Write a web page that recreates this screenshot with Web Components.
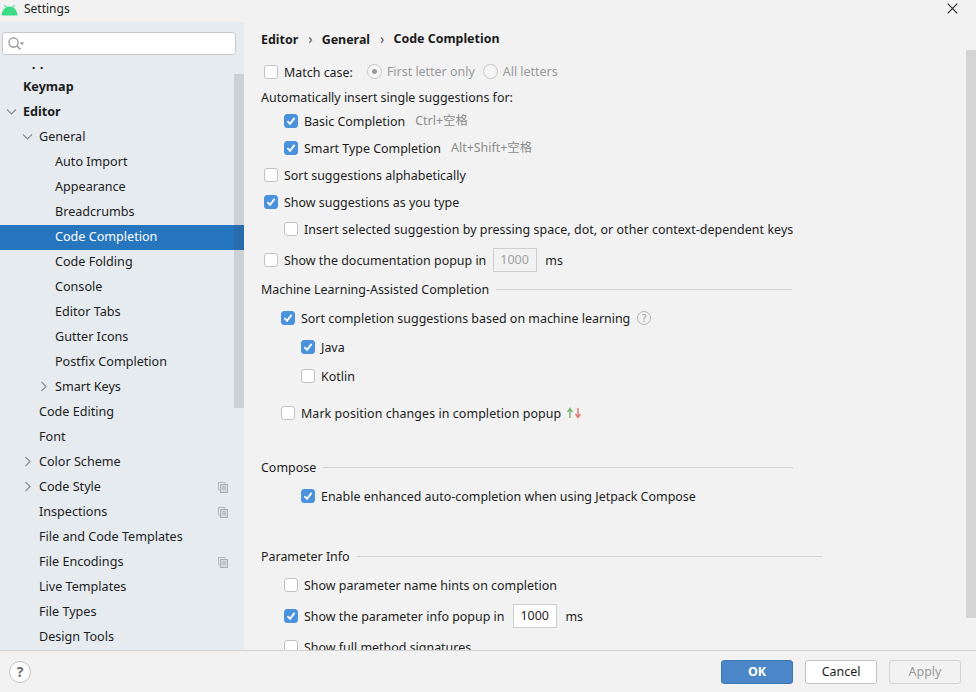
<!DOCTYPE html>
<html>
<head>
<meta charset="utf-8">
<title>Settings</title>
<style>
html, body { margin: 0; padding: 0; background: #f2f2f2; }
body { font: 12.45px "Noto Sans", "Noto Sans CJK SC", sans-serif; color: #1c1c1c; }
</style>
</head>
<body>
<settings-dialog>
  <tree-item slot="tree" bold style="margin-top:-17px">Appearance &amp; Behavior</tree-item>
  <tree-item slot="tree" bold>Keymap</tree-item>
  <tree-item slot="tree" bold arrow="down">Editor</tree-item>
  <tree-item slot="tree" level="1" arrow="down">General</tree-item>
  <tree-item slot="tree" level="2">Auto Import</tree-item>
  <tree-item slot="tree" level="2">Appearance</tree-item>
  <tree-item slot="tree" level="2">Breadcrumbs</tree-item>
  <tree-item slot="tree" level="2" selected>Code Completion</tree-item>
  <tree-item slot="tree" level="2">Code Folding</tree-item>
  <tree-item slot="tree" level="2">Console</tree-item>
  <tree-item slot="tree" level="2">Editor Tabs</tree-item>
  <tree-item slot="tree" level="2">Gutter Icons</tree-item>
  <tree-item slot="tree" level="2">Postfix Completion</tree-item>
  <tree-item slot="tree" level="2" arrow="right">Smart Keys</tree-item>
  <tree-item slot="tree" level="1">Code Editing</tree-item>
  <tree-item slot="tree" level="1">Font</tree-item>
  <tree-item slot="tree" level="1" arrow="right">Color Scheme</tree-item>
  <tree-item slot="tree" level="1" arrow="right" copy>Code Style</tree-item>
  <tree-item slot="tree" level="1" copy>Inspections</tree-item>
  <tree-item slot="tree" level="1">File and Code Templates</tree-item>
  <tree-item slot="tree" level="1" copy>File Encodings</tree-item>
  <tree-item slot="tree" level="1">Live Templates</tree-item>
  <tree-item slot="tree" level="1">File Types</tree-item>
  <tree-item slot="tree" level="1">Design Tools</tree-item>

  <bread-crumbs>
    <span>Editor</span><span>General</span><span>Code Completion</span>
  </bread-crumbs>

  <check-row indent="3" gap="6">Match case:
    <radio-group slot="after">
      <radio-option selected>First letter only</radio-option>
      <radio-option>All letters</radio-option>
    </radio-group>
  </check-row>
  <plain-row gap="1">Automatically insert single suggestions for:</plain-row>
  <check-row indent="23" checked>Basic Completion<hint-text slot="after">Ctrl+空格</hint-text></check-row>
  <check-row indent="23" gap="3" checked>Smart Type Completion<hint-text slot="after">Alt+Shift+空格</hint-text></check-row>
  <check-row indent="3" gap="3">Sort suggestions alphabetically</check-row>
  <check-row indent="3" gap="3" checked>Show suggestions as you type</check-row>
  <check-row indent="23" gap="3" style="letter-spacing:.05px">Insert selected suggestion by pressing space, dot, or other context-dependent keys</check-row>
  <check-row indent="3" gap="7">Show the documentation popup in
    <num-field slot="after" disabled style="margin-left:7px">1000</num-field>
  </check-row>
  <section-title gap="5" end="792">Machine Learning-Assisted Completion</section-title>
  <check-row indent="20" gap="5" checked>Sort completion suggestions based on machine learning<help-mark slot="after"></help-mark></check-row>
  <check-row indent="40" gap="5" checked>Java</check-row>
  <check-row indent="40" gap="5">Kotlin</check-row>
  <check-row indent="20" gap="13" style="letter-spacing:.07px">Mark position changes in completion popup<updown-arrows slot="after"></updown-arrows></check-row>
  <section-title gap="30" end="793">Compose</section-title>
  <check-row indent="40" gap="5" checked>Enable enhanced auto-completion when using Jetpack Compose</check-row>
  <section-title gap="36" end="822">Parameter Info</section-title>
  <check-row indent="23" gap="5">Show parameter name hints on completion</check-row>
  <check-row indent="23" gap="7" checked>Show the parameter info popup in
    <num-field slot="after" style="margin-left:9px">1000</num-field>
  </check-row>
  <check-row indent="23" gap="7">Show full method signatures</check-row>
</settings-dialog>

<script>
class SettingsDialog extends HTMLElement {
  constructor() {
    super();
    this.attachShadow({ mode: "open" }).innerHTML = `
    <style>
      :host { display: grid; grid-template-rows: 22px 628px 42px; width: 976px; height: 692px; overflow: hidden; background: #f2f2f2; }
      .title { display: flex; align-items: center; padding-left: 1px; position: relative; }
      .title svg.logo { width: 17px; height: 12px; margin-right: 6px; margin-top: -3px; }
      .title span { font-size: 12px; margin-top: -6px; color: #222; }
      .close { margin-left: auto; margin-right: 18px; margin-top: -6px; width: 11px; height: 11px; }
      .main { display: grid; grid-template-columns: 244px 1fr; min-height: 0; }
      .side { background: #e6ebf0; display: flex; flex-direction: column; position: relative; min-height: 0; }
      .search { margin: 10px 8px 12px 2px; height: 23px; flex: none; box-sizing: border-box; background: #fff; border: 1px solid #c9c9c9; border-radius: 3px; display: flex; align-items: center; padding-left: 4px; }
      .tree { flex: 1; overflow: hidden; min-height: 0; font-size: 12.6px; }
      .sbar { position: absolute; z-index: 3; left: 234px; top: 52px; width: 10px; height: 334px; background: rgba(60, 60, 60, .15); }
      .content { display: flex; flex-direction: column; padding-left: 17px; position: relative; overflow: hidden; min-height: 0; }
      .vbar { position: absolute; right: 0; top: 28px; width: 10px; height: 568px; background: #d4d4d4; }
      .foot { border-top: 1px solid #d1d1d1; display: flex; align-items: center; padding: 0 15px 0 9px; box-sizing: border-box; }
      .help { width: 22px; height: 22px; box-sizing: border-box; border: 1px solid #c4c4c4; border-radius: 50%; background: #fff; text-align: center; font: bold 14px/20px "Noto Sans", sans-serif; color: #6e6e6e; margin-right: auto; }
    </style>
    <div class="title">
      <svg class="logo" viewBox="0 0 17 12"><path d="M3.5 1 5.4 3.4M13.5 1 11.6 3.4" stroke="#3ddc84" stroke-width="1.1" fill="none"/><path d="M.5 11.5C.8 6.5 4 2.6 8.5 2.6s7.7 3.9 8 8.9z" fill="#3ddc84"/></svg>
      <span>Settings</span>
      <svg class="close" viewBox="0 0 11 11"><path d="M.7.7 10.3 10.3M10.3.7.7 10.3" stroke="#2b2b2b" stroke-width="1.2"/></svg>
    </div>
    <div class="main">
      <div class="side">
        <div class="search">
          <svg width="18" height="16" viewBox="0 0 18 16"><circle cx="6.5" cy="6.5" r="4.6" fill="none" stroke="#8a8a8a" stroke-width="1.1"/><path d="M10 10 13.5 13.5" stroke="#8a8a8a" stroke-width="1.3"/><path d="M13 6.5h4l-2 2.4z" fill="#8a8a8a"/></svg>
        </div>
        <div class="tree"><slot name="tree"></slot></div>
        <div class="sbar"></div>
      </div>
      <div class="content"><slot></slot><div class="vbar"></div></div>
    </div>
    <div class="foot">
      <div class="help">?</div>
      <dlg-button primary>OK</dlg-button>
      <dlg-button style="margin-left:12px">Cancel</dlg-button>
      <dlg-button disabled style="margin-left:12px">Apply</dlg-button>
    </div>`;
  }
}

class TreeItem extends HTMLElement {
  constructor() {
    super();
    const level = +(this.getAttribute("level") || 0);
    const arrow = this.getAttribute("arrow");
    const paths = { down: "M1 3.5 5.5 8 10 3.5", right: "M3.5 1 8 5.5 3.5 10" };
    this.attachShadow({ mode: "open" }).innerHTML = `
    <style>
      :host { display: flex; align-items: center; height: 25px; position: relative; box-sizing: border-box; white-space: nowrap; padding-left: ${23 + level * 16}px; padding-bottom: 3px; }
      :host([bold]) { font-weight: 700; }
      :host([selected]) { background: #2675bf; color: #fff; }
      .arrow { position: absolute; left: ${6 + level * 16}px; top: 6px; width: 11px; height: 11px; }
      .copy { position: absolute; left: 218px; top: 7px; width: 10px; height: 11px; }
    </style>
    ${arrow ? `<svg class="arrow" viewBox="0 0 11 11"><path d="${paths[arrow]}" fill="none" stroke="#8c8c8c" stroke-width="1.1"/></svg>` : ""}
    <slot></slot>
    ${this.hasAttribute("copy") ? `<svg class="copy" viewBox="0 0 10 11"><path d="M.5.5h6.5v2M.5.5v7.5h2" fill="none" stroke="#b4b8bc"/><rect x="2.5" y="2.5" width="7" height="8" fill="#d5d9dd" stroke="#abafb3"/><path d="M4 5h4M4 7h4" stroke="#abafb3"/></svg>` : ""}`;
  }
}

class BreadCrumbs extends HTMLElement {
  constructor() {
    super();
    this.attachShadow({ mode: "open" }).innerHTML = `
    <style>
      :host { display: flex; align-items: center; height: 32px; flex: none; font-weight: 700; color: #1c1c1c; }
      ::slotted(span:not(:last-child))::after { content: "\\203A"; font-weight: 400; color: #555; margin: 0 9px 0 10px; font-size: 14px; }
    </style>
    <slot></slot>`;
  }
}

class CheckRow extends HTMLElement {
  constructor() {
    super();
    const checked = this.hasAttribute("checked");
    this.attachShadow({ mode: "open" }).innerHTML = `
    <style>
      :host { display: flex; align-items: center; height: 24px; white-space: nowrap; flex: none; padding-left: ${this.getAttribute("indent") || 0}px; margin-top: ${this.getAttribute("gap") || 0}px; }
      .box { width: 14px; height: 14px; box-sizing: border-box; border-radius: 3px; margin-right: 6px; flex: none; border: 1px solid #c2c2c2; background: #fff; }
      .box.on { background: #4a92dc; border-color: #4a92dc; }
      .box svg { display: block; }
    </style>
    <div class="box ${checked ? "on" : ""}">${checked ? `<svg width="12" height="12" viewBox="0 0 12 12"><path d="M2.4 6.2 5 8.8 9.6 2.9" fill="none" stroke="#fff" stroke-width="1.8"/></svg>` : ""}</div>
    <slot></slot><slot name="after"></slot>`;
  }
}

class PlainRow extends HTMLElement {
  constructor() {
    super();
    this.attachShadow({ mode: "open" }).innerHTML = `
    <style>:host { display: flex; align-items: center; height: 24px; flex: none; white-space: nowrap; margin-top: ${this.getAttribute("gap") || 0}px; }</style>
    <slot></slot>`;
  }
}

class SectionTitle extends HTMLElement {
  constructor() {
    super();
    this.attachShadow({ mode: "open" }).innerHTML = `
    <style>
      :host { display: flex; align-items: center; height: 24px; flex: none; white-space: nowrap; width: ${+this.getAttribute("end") - 261}px; margin-top: ${this.getAttribute("gap") || 0}px; }
      i { flex: 1; height: 1px; background: #d1d1d1; margin-left: 7px; }
    </style>
    <slot></slot><i></i>`;
  }
}

class RadioGroup extends HTMLElement {
  constructor() {
    super();
    this.attachShadow({ mode: "open" }).innerHTML = `
    <style>
      :host { display: inline-flex; align-items: center; margin-left: 14px; gap: 8px; position: relative; top: -1px; }
    </style>
    <slot></slot>`;
  }
}

class RadioOption extends HTMLElement {
  constructor() {
    super();
    this.attachShadow({ mode: "open" }).innerHTML = `
    <style>
      :host { display: inline-flex; align-items: center; color: #999; }
      .r { width: 15px; height: 15px; box-sizing: border-box; border: 1px solid #c6c6c6; border-radius: 50%; margin-right: 5px; display: flex; align-items: center; justify-content: center; background: #f5f5f5; }
      .r b { width: 5px; height: 5px; border-radius: 50%; background: #9a9a9a; display: ${this.hasAttribute("selected") ? "block" : "none"}; }
    </style>
    <span class="r"><b></b></span><slot></slot>`;
  }
}

class HintText extends HTMLElement {
  constructor() {
    super();
    this.attachShadow({ mode: "open" }).innerHTML = `
    <style>:host { display: inline-block; color: #8c8c8c; margin-left: 10px; position: relative; top: -1px; }</style>
    <slot></slot>`;
  }
}

class NumField extends HTMLElement {
  constructor() {
    super();
    this.attachShadow({ mode: "open" }).innerHTML = `
    <style>
      :host { display: inline-flex; align-items: center; margin-left: 8px; }
      .f { width: 44px; height: 24px; box-sizing: border-box; border: 1px solid #cdcdcd; background: #fff; padding-left: 6px; line-height: 21px; }
      :host([disabled]) .f { background: #f2f2f2; color: #a0a0a0; }
      span { margin-left: 8px; }
    </style>
    <div class="f"><slot></slot></div><span>ms</span>`;
  }
}

class HelpMark extends HTMLElement {
  constructor() {
    super();
    this.attachShadow({ mode: "open" }).innerHTML = `
    <style>
      :host { display: inline-block; width: 14px; height: 14px; box-sizing: border-box; margin-left: 7px; border: 1px solid #b5b5b5; border-radius: 50%; text-align: center; font-size: 10px; line-height: 12px; color: #9a9a9a; }
    </style>?`;
  }
}

class UpdownArrows extends HTMLElement {
  constructor() {
    super();
    this.attachShadow({ mode: "open" }).innerHTML = `
    <style>:host { display: inline-block; margin-left: 5px; height: 12px; } svg { display: block; }</style>
    <svg width="16" height="12" viewBox="0 0 16 12"><path d="M4 11V2M1.5 5 4 1.5 6.500 5" fill="none" stroke="#7cb87c" stroke-width="1.5"/><path d="M12 1v9M9.500 7 12 10.500 14.500 7" fill="none" stroke="#e07a7a" stroke-width="1.5"/></svg>`;
  }
}

class DlgButton extends HTMLElement {
  constructor() {
    super();
    this.attachShadow({ mode: "open" }).innerHTML = `
    <style>
      :host { display: flex; align-items: center; justify-content: center; width: 72px; height: 24px; box-sizing: border-box; border: 1px solid #c4c4c4; border-radius: 3px; background: #fff; color: #1c1c1c; }
      :host([primary]) { background: #4a86c8; border-color: #3f78b5; color: #fff; font-weight: 700; }
      :host([disabled]) { background: #f2f2f2; border-color: #d2d2d2; color: #999; }
    </style>
    <slot></slot>`;
  }
}

customElements.define("settings-dialog", SettingsDialog);
customElements.define("tree-item", TreeItem);
customElements.define("bread-crumbs", BreadCrumbs);
customElements.define("check-row", CheckRow);
customElements.define("plain-row", PlainRow);
customElements.define("section-title", SectionTitle);
customElements.define("radio-group", RadioGroup);
customElements.define("radio-option", RadioOption);
customElements.define("hint-text", HintText);
customElements.define("num-field", NumField);
customElements.define("help-mark", HelpMark);
customElements.define("updown-arrows", UpdownArrows);
customElements.define("dlg-button", DlgButton);
</script>
</body>
</html>
